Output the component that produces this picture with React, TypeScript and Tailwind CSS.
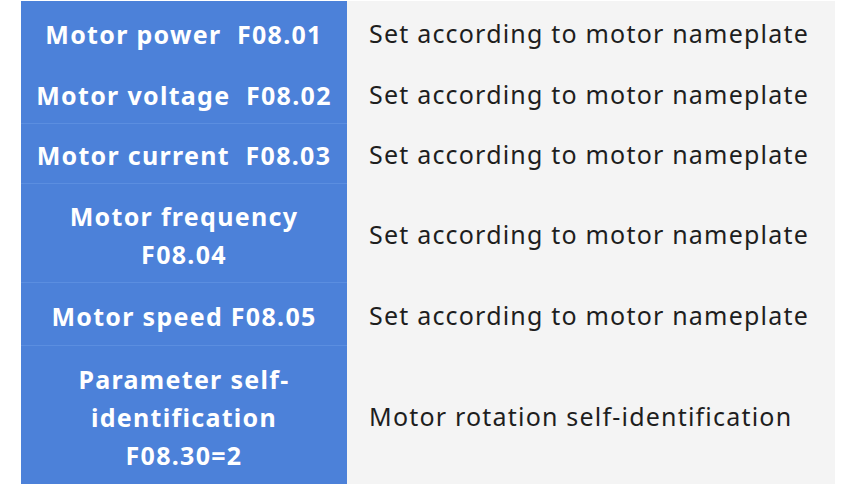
const rows = [
  { label: ["Motor power\u00a0\u00a0F08.01"], value: "Set according to motor nameplate", h: "h-[62px]" },
  { label: ["Motor voltage\u00a0\u00a0F08.02"], value: "Set according to motor nameplate", h: "h-[60px]" },
  { label: ["Motor current\u00a0\u00a0F08.03"], value: "Set according to motor nameplate", h: "h-[60px]" },
  { label: ["Motor frequency", "F08.04"], value: "Set according to motor nameplate", h: "h-[99px]" },
  { label: ["Motor speed F08.05"], value: "Set according to motor nameplate", h: "h-[63px]" },
  { label: ["Parameter self-", "identification", "F08.30=2"], value: "Motor rotation self-identification", h: "h-[139px]" },
];

export default function App() {
  return (
    <div className="w-[857px] h-[491px] bg-white pt-px pl-[21px]" style={{ fontFamily: '"Noto Sans", "Open Sans", sans-serif' }}>
      <div className="w-[814px] flex flex-col">
        {rows.map((row, i) => (
          <div key={i} className={`flex ${row.h}`}>
            <div
              className={`w-[326px] bg-[#4c81d9] flex flex-col items-center justify-center pt-[3px] text-white font-bold text-[25px] leading-[38px] tracking-[1.3px] ${
                i > 1 ? "border-t border-[#5b8ee0]" : ""
              }`}
            >
              {row.label.map((l, j) => (
                <div key={j}>{l}</div>
              ))}
            </div>
            <div className="flex-1 bg-[#f4f4f4] flex items-center pl-[22px] pt-[4px] text-[#1e1e1e] text-[25px] tracking-[1.2px]">
              {row.value}
            </div>
          </div>
        ))}
      </div>
    </div>
  );
}
